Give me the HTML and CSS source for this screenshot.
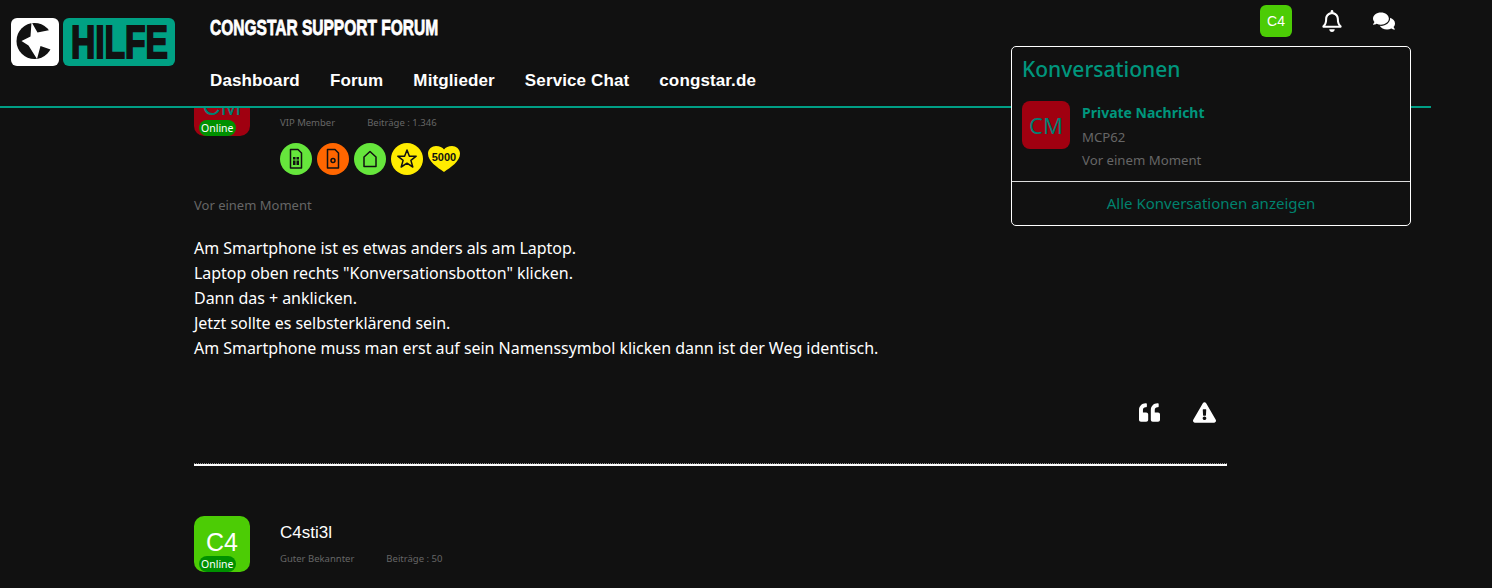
FILE: index.html
```html
<!DOCTYPE html>
<html lang="de">
<head>
    <meta charset="UTF-8">
    <meta name="viewport" content="width=device-width, initial-scale=1.0">
    <title>Congstar Support Forum</title>
    <link rel="stylesheet" href="styles.css">
</head>
<body>
    <header class="site-header">
        <a class="logo" href="#">
            <span class="logo-mark">
                <svg viewBox="0 0 48 48" width="48" height="48">
                    <circle cx="23.500" cy="23" r="18" fill="#111"/>
                    <path fill="#fff" d="M20.500 4l6 10.500L44 11v21l-3 0-11.500-4-3.500 13-8.500-13.500L10.500 23l9-4.500z"/>
                </svg>
            </span>
            <span class="logo-word"><span>HILFE</span></span>
        </a>
        <div class="header-main">
            <div class="forum-title">CONGSTAR SUPPORT FORUM</div>
            <nav class="main-nav">
                <a href="#">Dashboard</a>
                <a href="#">Forum</a>
                <a href="#">Mitglieder</a>
                <a href="#">Service Chat</a>
                <a href="#">congstar.de</a>
            </nav>
        </div>
        <div class="user-tools">
            <span class="user-badge">C4</span>
            <svg class="tool-icon bell" viewBox="0 0 448 512"><path d="M439.39 362.29c-19.32-20.76-55.47-51.99-55.47-154.29 0-77.7-54.48-139.9-127.94-155.16V32c0-17.67-14.32-32-31.98-32s-31.98 14.33-31.98 32v20.84C118.56 68.1 64.08 130.3 64.08 208c0 102.3-36.15 133.53-55.47 154.29-6 6.45-8.66 14.16-8.61 21.71.11 16.4 12.98 32 32.1 32h383.8c19.12 0 32-15.6 32.1-32 .05-7.55-2.61-15.27-8.61-21.71zM67.53 368c21.22-27.97 44.42-74.33 44.53-159.42 0-.2-.06-.38-.06-.58 0-61.86 50.14-112 112-112s112 50.14 112 112c0 .2-.06.38-.06.58.11 85.1 23.31 131.46 44.53 159.42H67.53zM224 512c35.32 0 63.97-28.65 63.97-64H160.03c0 35.35 28.65 64 63.97 64z"/></svg>
            <svg class="tool-icon chat" viewBox="0 0 576 512"><path d="M416 192c0-88.4-93.1-160-208-160S0 103.6 0 192c0 34.3 14.1 65.9 38 92-13.4 30.2-35.5 54.2-35.8 54.5-2.2 2.3-2.8 5.7-1.5 8.7S4.8 352 8 352c36.6 0 66.9-12.3 88.7-25 32.2 15.7 70.3 25 111.3 25 114.9 0 208-71.6 208-160zm122 220c23.9-26 38-57.7 38-92 0-66.9-53.5-124.2-129.3-148.1.9 6.6 1.3 13.3 1.3 20.1 0 105.9-107.7 192-240 192-10.8 0-21.3-.8-31.7-1.9C207.8 439.6 281.8 480 368 480c41 0 79.1-9.2 111.3-25 21.8 12.7 52.1 25 88.7 25 3.2 0 6.1-1.9 7.3-4.8 1.3-2.9.7-6.3-1.5-8.7-.3-.3-22.4-24.2-35.8-54.5z"/></svg>
        </div>
    </header>

    <div class="conversations">
        <h2>Konversationen</h2>
        <div class="conv-item">
            <span class="avatar">CM</span>
            <div class="conv-text">
                <a href="#" class="conv-title">Private Nachricht</a>
                <div>MCP62</div>
                <div>Vor einem Moment</div>
            </div>
        </div>
        <a href="#" class="conv-all">Alle Konversationen anzeigen</a>
    </div>

    <main class="thread">
        <article class="post first-post">
            <div class="post-head">
                <div class="avatar-wrap">
                    <span class="avatar">CM</span>
                    <span class="online">Online</span>
                </div>
                <div class="author">
                    <div class="author-name">MCP62</div>
                    <div class="author-meta"><span>VIP Member</span><span>Beiträge : 1.346</span></div>
                    <div class="badges">
                        <span class="badge green">
                            <svg viewBox="0 0 32 32"><path d="M10.500 6.500h7.500l3.500 3.500v15h-11z"/><path class="fill" d="M13 14h2.500v2.500H13zm3.500 0H19v2.500h-2.500zM13 17.500h2.500V22H13zm3.500 0H19V22h-2.500z"/></svg>
                        </span>
                        <span class="badge orange">
                            <svg viewBox="0 0 32 32"><path d="M10.500 6.500h7.500l3.500 3.500v15h-11z"/><circle cx="16" cy="17.500" r="2"/></svg>
                        </span>
                        <span class="badge green">
                            <svg viewBox="0 0 32 32"><path d="M10 14l6-5.500 6 5.500v9.500H10z"/></svg>
                        </span>
                        <span class="badge yellow">
                            <svg viewBox="0 0 32 32"><path d="M16 7l2.400 6.200h6.800l-5.300 4.200 1.900 6.600-5.800-3.800-5.800 3.800 1.900-6.600-5.300-4.200h6.800z"/></svg>
                        </span>
                        <span class="heart">
                            <svg viewBox="0 0 32 26" preserveAspectRatio="none"><path d="M16 26C9 21 0 15.500 0 7.500 0 3 4 0 8 0c3.500 0 6.500 1.500 8 3.500C17.500 1.500 20.500 0 24 0c4 0 8 3 8 7.500 0 8-9 13.500-16 18.500z"/></svg>
                            <b>5000</b>
                        </span>
                    </div>
                </div>
            </div>
            <div class="post-time">Vor einem Moment</div>
            <div class="post-body">
                Am Smartphone ist es etwas anders als am Laptop.<br>
                Laptop oben rechts "Konversationsbotton" klicken.<br>
                Dann das + anklicken.<br>
                Jetzt sollte es selbsterklärend sein.<br>
                Am Smartphone muss man erst auf sein Namenssymbol klicken dann ist der Weg identisch.
            </div>
            <div class="post-actions">
                <svg class="quote" viewBox="0 0 512 512"><path d="M464 256h-80v-64c0-35.300 28.700-64 64-64h8c13.300 0 24-10.700 24-24V56c0-13.300-10.700-24-24-24h-8c-88.400 0-160 71.600-160 160v240c0 26.500 21.500 48 48 48h128c26.500 0 48-21.500 48-48V304c0-26.500-21.500-48-48-48zm-288 0H96v-64c0-35.300 28.700-64 64-64h8c13.300 0 24-10.700 24-24V56c0-13.300-10.700-24-24-24h-8C71.600 32 0 103.600 0 192v240c0 26.500 21.500 48 48 48h128c26.500 0 48-21.500 48-48V304c0-26.500-21.500-48-48-48z"/></svg>
                <svg class="report" viewBox="0 0 576 512"><path d="M569.517 440.013C587.975 472.007 564.806 512 527.94 512H48.054c-36.937 0-59.999-40.055-41.577-71.987L246.423 23.985c18.467-32.009 64.72-31.951 83.154 0l239.94 416.028zM288 354c-25.405 0-46 20.595-46 46s20.595 46 46 46 46-20.595 46-46-20.595-46-46-46zm-43.673-165.346l7.418 136c.347 6.364 5.609 11.346 11.982 11.346h48.546c6.373 0 11.635-4.982 11.982-11.346l7.418-136c.375-6.874-5.098-12.654-11.982-12.654h-63.383c-6.884 0-12.356 5.780-11.981 12.654z"/></svg>
            </div>
        </article>

        <article class="post">
            <div class="post-head">
                <div class="avatar-wrap">
                    <span class="avatar lime">C4</span>
                    <span class="online">Online</span>
                </div>
                <div class="author">
                    <div class="author-name">C4sti3l</div>
                    <div class="author-meta"><span>Guter Bekannter</span><span>Beiträge : 50</span></div>
                </div>
            </div>
        </article>
    </main>
</body>
</html>
```

FILE: styles.css
```css
html, body {
    height: 100%;
}
body {
    margin: 0;
    background-color: #111;
    color: #fff;
    font-family: "Noto Sans", "Liberation Sans", sans-serif;
    font-size: 16px;
    overflow: hidden;
}
a {
    color: inherit;
    text-decoration: none;
}

/* header */
.site-header {
    position: relative;
    z-index: 2;
    display: flex;
    width: 1431px;
    height: 106px;
    background-color: #111;
    border-bottom: 2px solid #009e85;
}
.logo {
    display: flex;
    gap: 4px;
    height: 48px;
    margin: 18px 35px 0 11px;
}
.logo-mark {
    width: 48px;
    height: 48px;
    background-color: #fff;
    border-radius: 6px;
}
.logo-mark svg {
    display: block;
}
.logo-word {
    width: 112px;
    height: 48px;
    background-color: #00a184;
    border-radius: 6px;
    color: #111;
    font-family: "Liberation Sans", sans-serif;
    font-size: 46px;
    font-weight: bold;
    line-height: 48px;
    text-align: center;
}
.logo-word span {
    display: inline-block;
    transform: scaleX(0.73);
    transform-origin: center;
    margin: 0 -20px;
    -webkit-text-stroke: 2px #111;
}
.header-main {
    flex: 1;
}
.forum-title {
    margin-top: 15px;
    font-family: "Liberation Sans", sans-serif;
    font-size: 22px;
    font-weight: bold;
    line-height: 26px;
    white-space: nowrap;
    transform: scaleX(0.705);
    transform-origin: left;
    -webkit-text-stroke: 0.8px #fff;
}
.main-nav {
    display: flex;
    gap: 30px;
    margin-top: 27px;
    font-family: "Liberation Sans", Arial, sans-serif;
    font-size: 17px;
    font-weight: bold;
    letter-spacing: 0.12px;
    line-height: 26px;
}
.user-tools {
    display: flex;
    align-items: flex-start;
    margin: 5px 36px 0 0;
}
.user-badge {
    width: 32px;
    height: 32px;
    background-color: #4ccc05;
    border-radius: 6px;
    font-family: "Liberation Sans", Arial, sans-serif;
    font-size: 14px;
    line-height: 32px;
    text-align: center;
}
.tool-icon {
    fill: #fff;
}
.bell {
    width: 20px;
    height: 22px;
    margin: 5px 0 0 30px;
}
.chat {
    width: 22px;
    height: 20px;
    margin: 6px 0 0 31px;
}

/* conversations dropdown */
.conversations {
    position: absolute;
    z-index: 3;
    top: 46px;
    left: 1011px;
    width: 398px;
    height: 178px;
    background-color: #111;
    border: 1px solid #fff;
    border-radius: 5px;
}
.conversations h2 {
    margin: 7px 10px 0;
    color: #00967d;
    font-size: 21px;
    font-weight: 500;
    line-height: 30px;
}
.conv-item {
    display: flex;
    gap: 12px;
    height: 80px;
    margin-top: 17px;
    padding-left: 10px;
    border-bottom: 1px solid #ddd;
}
.conv-text {
    color: #666;
    font-size: 13.200px;
    line-height: 23px;
}
.conv-title {
    display: block;
    margin-bottom: 2px;
    color: #00967d;
    font-size: 14px;
    font-weight: bold;
}
.conv-all {
    display: block;
    margin-top: 10px;
    color: #00826e;
    font-size: 15px;
    line-height: 22px;
    text-align: center;
}

/* posts */
.thread {
    width: 1033px;
    margin: -28px 0 0 194px;
}
.post-head {
    display: flex;
    gap: 30px;
}
.avatar-wrap {
    position: relative;
    width: 56px;
    height: 56px;
}
.avatar {
    display: block;
    flex: none;
    width: 48px;
    height: 48px;
    background-color: #a00010;
    border-radius: 8px;
    color: #007f73;
    font-size: 22px;
    line-height: 48px;
    text-align: center;
}
.avatar-wrap .avatar {
    width: 56px;
    height: 52px;
    padding-bottom: 4px;
    border-radius: 10px;
    font-family: "Liberation Sans", Arial, sans-serif;
    font-size: 25px;
    line-height: 52px;
}
.avatar.lime {
    background-color: #4ccc05;
    color: #fff;
}
.online {
    position: absolute;
    left: 5px;
    bottom: 0;
    padding: 0 2px;
    height: 16px;
    background-color: #009000;
    border-radius: 8px;
    font-size: 10.500px;
    line-height: 16px;
}
.author-name {
    height: 37px;
    font-family: "Liberation Sans", Arial, sans-serif;
    font-size: 17px;
    line-height: 34px;
}
.author-meta {
    display: flex;
    gap: 32px;
    color: #666;
    font-size: 9.500px;
    line-height: 12px;
}
.badges {
    display: flex;
    gap: 5px;
    margin-top: 14px;
}
.badge {
    width: 32px;
    height: 32px;
    border-radius: 50%;
}
.badge svg {
    display: block;
    fill: none;
    stroke: #111;
    stroke-linejoin: round;
    stroke-width: 1.500;
}
.badge .fill {
    fill: #111;
    stroke: none;
}
.badge.green {
    background-color: #66e63c;
}
.badge.orange {
    background-color: #ff6600;
}
.badge.yellow {
    background-color: #ffec00;
}
.heart {
    position: relative;
    width: 32px;
    height: 32px;
}
.heart svg {
    display: block;
    width: 32px;
    height: 26px;
    margin-top: 3px;
    fill: #ffec00;
}
.heart b {
    position: absolute;
    top: 6px;
    left: 0;
    width: 32px;
    color: #111;
    font-family: "Liberation Sans", Arial, sans-serif;
    font-size: 11px;
    line-height: 16px;
    text-align: center;
}
.post-time {
    margin-top: 21px;
    color: #666;
    font-size: 13px;
    line-height: 18px;
}
.post-body {
    margin-top: 22px;
    letter-spacing: -0.035px;
    line-height: 25px;
}
.post-actions {
    display: flex;
    justify-content: flex-end;
    gap: 33px;
    height: 61px;
    padding-right: 11px;
    margin-top: 41px;
    border-bottom: 1px dotted #888;
}
.post-actions svg {
    fill: #fff;
    height: 21px;
}
.quote {
    width: 21px;
}
.report {
    width: 23px;
}
.first-post {
    border-bottom: 2px solid #fff;
    margin-bottom: 50px;
}
```
